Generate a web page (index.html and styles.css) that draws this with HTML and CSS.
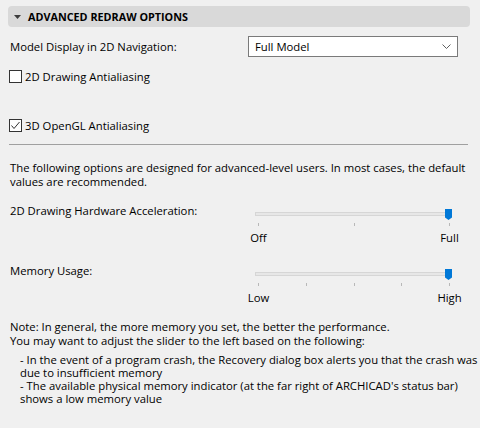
FILE: index.html
```html
<!DOCTYPE html>
<html>
<head>
<meta charset="utf-8">
<link rel="stylesheet" href="styles.css">
</head>
<body>
<div class="panel">
  <div class="header">
    <svg class="caret" width="7" height="4" viewBox="0 0 7 4"><polygon points="0,0 7,0 3.5,4" fill="#3c3c3c"/></svg>
    <span class="title">ADVANCED REDRAW OPTIONS</span>
  </div>

  <div class="row-select">
    <span class="label">Model Display in 2D Navigation:</span>
    <div class="select">
      <span>Full Model</span>
      <svg class="chev" width="9" height="5" viewBox="0 0 9 5"><polyline points="0.5,0.5 4.5,4.5 8.5,0.5" fill="none" stroke="#606060" stroke-width="1"/></svg>
    </div>
  </div>

  <div class="check first">
    <span class="box"></span>
    <span class="label">2D Drawing Antialiasing</span>
  </div>

  <div class="check second">
    <span class="box"><svg width="11" height="11" viewBox="0 0 11 11"><polyline points="1.5,5.5 4,8.5 9.5,2" fill="none" stroke="#333" stroke-width="1"/></svg></span>
    <span class="label">3D OpenGL Antialiasing</span>
  </div>

  <div class="sep"></div>

  <p class="intro">The following options are designed for advanced-level users. In most cases, the default values are recommended.</p>

  <div class="row-slider accel">
    <span class="label">2D Drawing Hardware Acceleration:</span>
    <div class="slider">
      <div class="track"></div>
      <svg class="thumb" width="7" height="11" viewBox="0 0 7 11"><polygon points="0,0 7,0 7,8.5 3.5,11 0,8.5" fill="#0078d7"/></svg>
      <div class="ticks"><i></i><i></i><i></i></div>
      <div class="ticklabels"><span>Off</span><span>Full</span></div>
    </div>
  </div>

  <div class="row-slider memory">
    <span class="label">Memory Usage:</span>
    <div class="slider">
      <div class="track"></div>
      <svg class="thumb" width="7" height="11" viewBox="0 0 7 11"><polygon points="0,0 7,0 7,8.5 3.5,11 0,8.5" fill="#0078d7"/></svg>
      <div class="ticks"><i></i><i></i><i></i><i></i><i></i></div>
      <div class="ticklabels"><span>Low</span><span>High</span></div>
    </div>
  </div>

  <div class="note">
    <p>Note: In general, the more memory you set, the better the performance.<br>You may want to adjust the slider to the left based on the following:</p>
    <ul>
      <li>- In the event of a program crash, the Recovery dialog box alerts you that the crash was due to insufficient memory</li>
      <li>- The available physical memory indicator (at the far right of ARCHICAD's status bar) shows a low memory value</li>
    </ul>
  </div>
</div>
</body>
</html>
```
FILE: styles.css
```css
html, body {
  margin: 0;
  padding: 0;
  background: #f0f0f0;
}
body {
  font-family: "Open Sans", "Noto Sans", sans-serif;
  font-size: 11.3px;
  color: #000;
  width: 480px;
  height: 428px;
  overflow: hidden;
}
.panel {
  padding: 6px 10px 0 10px;
}
.header {
  margin-left: -2px;
  height: 21px;
  background: #d9d9d9;
  border-radius: 4px;
  display: flex;
  align-items: center;
}
.caret {
  margin-left: 6px;
  margin-top: 1px;
}
.title {
  margin-left: 7px;
  font-weight: bold;
  font-size: 10.8px;
}
.row-select {
  margin-top: 9px;
  display: flex;
  align-items: center;
  justify-content: space-between;
}
.select {
  box-sizing: border-box;
  width: 210px;
  height: 21px;
  margin-right: 12px;
  background: #fff;
  border: 1px solid #7a7a7a;
  display: flex;
  align-items: center;
  justify-content: space-between;
  padding: 0 6px 0 6px;
}
.check {
  display: flex;
  align-items: center;
  height: 16px;
}
.check.first { margin-top: 11px; }
.check.second { margin-top: 33px; }
.box {
  box-sizing: border-box;
  width: 13px;
  height: 13px;
  border: 1px solid #333;
  background: #fff;
  margin-left: -1px;
  margin-right: 3px;
  display: flex;
  align-items: center;
  justify-content: center;
}
.sep {
  margin: 11px 2px 0 -1px;
  height: 1px;
  background: #a0a0a0;
}
.intro {
  margin: 16px 0 0 0;
  line-height: 14px;
}
.row-slider {
  display: flex;
  justify-content: space-between;
  align-items: flex-start;
  line-height: 14px;
}
.accel { margin-top: 15px; }
.memory { margin-top: 19px; }
.slider {
  position: relative;
  width: 214px;
  margin-right: 9px;
  padding-top: 8px;
}
.track {
  box-sizing: border-box;
  height: 4px;
  margin: 0 9px 0 8px;
  background: #e7e7e7;
  border: 1px solid #d6d6d6;
}
.thumb {
  position: absolute;
  top: 5px;
  right: 9px;
}
.ticks {
  display: flex;
  justify-content: space-between;
  margin: 7px 11px 0 11px;
  height: 3px;
}
.ticks i {
  width: 1px;
  background: #b8b8b8;
}
.ticklabels {
  display: flex;
  justify-content: space-between;
  margin: 5px 11px 0 11px;
}
.ticklabels span {
  width: 1px;
  display: flex;
  justify-content: center;
  white-space: nowrap;
}
.note {
  margin-top: 15px;
}
.note p {
  margin: 0;
  line-height: 14px;
}
.note ul {
  list-style: none;
  margin: 5px -10px 0 0;
  padding: 0 0 0 10px;
  line-height: 13px;
}
```
